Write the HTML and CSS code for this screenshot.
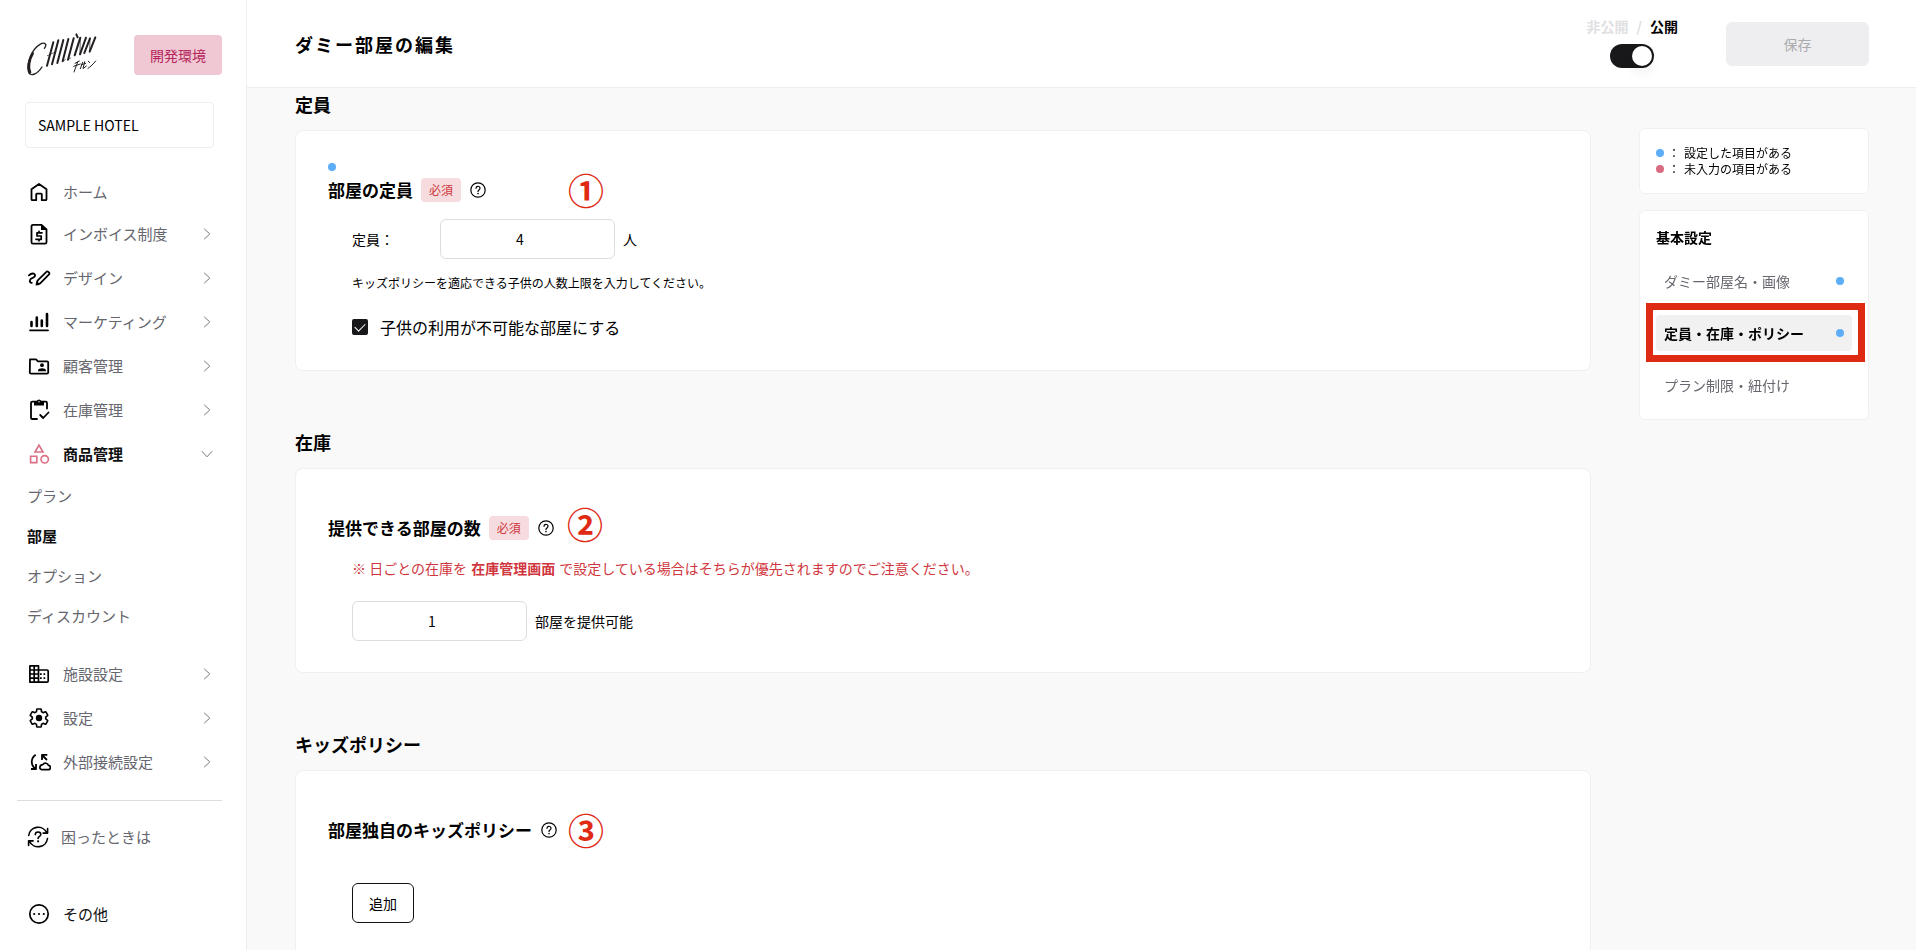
FILE: index.html
```html
<!DOCTYPE html>
<html lang="ja">
<head>
<meta charset="utf-8">
<meta name="viewport" content="width=device-width, initial-scale=1">
<title>ダミー部屋の編集</title>
<link rel="stylesheet" href="styles.css">
</head>
<body>
<svg class="defs" aria-hidden="true">
  <symbol id="chevron" viewBox="0 0 20 20"><path d="M7.2 4.8 L12.8 10 L7.2 15.2" /></symbol>
  <symbol id="help" viewBox="0 0 18 18">
    <circle cx="9" cy="9" r="7.2" />
    <path d="M7 7.3a2 2 0 1 1 3 1.7c-.7.4-1 .7-1 1.4" />
    <circle class="fill" cx="9" cy="12.6" r=".8" />
  </symbol>
</svg>
<div class="app">
  <aside class="sidebar">
    <div class="brand">
      <svg class="logo" viewBox="48 40 216 132" role="img" aria-label="CHILLNN">
        <path stroke-width="4" d="M103 86C113 74 104 66 90 74C66 88 49 130 55 154C59 174 82 164 96 142" />
        <path stroke-width="8" d="M68 101C57 120 53 144 60 158" />
        <path stroke-width="6" d="M130 68L111 138M145 62L126 134M160 61L142 130M175 58L158 125M191 56L174 120M211 54L194 107M228 54L210 104M240 56L223 100M256 53L239 96" />
        <path stroke-width="2" d="M112 108L138 96M157 125L166 120M173 120L182 115M211 56L210 102M240 58L239 94" />
        <path stroke-width="6" d="M199 44L203 53" />
        <path stroke-width="3" d="M195 131L208 124M191 140L211 133M203 127L192 157M218 128L211 147M224 126L219 147L229 139M215 135L227 131M235 125L239 129M234 146C242 141 250 133 257 124" />
      </svg>
      <span class="env">開発環境</span>
    </div>
    <select class="hotel" aria-label="施設"><option>SAMPLE HOTEL</option></select>
    <nav class="nav" aria-label="メインメニュー">
      <a class="item item--home" href="#">
        <svg class="icon" viewBox="0 0 24 24"><path d="M4.500 9.300 12 4l7.500 5.300V19.200a1 1 0 0 1-1 1h-3.700v-5.700a.8.8 0 0 0-.8-.8h-4a.8.8 0 0 0-.8.8v5.700H5.500a1 1 0 0 1-1-1z" /></svg>
        <span>ホーム</span>
      </a>
      <button class="item" type="button">
        <svg class="icon" viewBox="0 0 24 24"><path d="M14.500 2.800H6a1.500 1.500 0 0 0-1.500 1.500v15.900A1.500 1.500 0 0 0 6 21.700h12a1.500 1.500 0 0 0 1.500-1.500V7.500z" /><path class="fill" d="M14 2v6h6z" /><path stroke-width="1.700" d="M15 10.800H10v3.200h4.200v3.300H9M12 9.300v1.500M12 17.300v1.500" /></svg>
        <span>インボイス制度</span><svg class="chev"><use href="#chevron" /></svg>
      </button>
      <button class="item" type="button">
        <svg class="icon" viewBox="0 0 24 24"><path d="M1.900 9.300C3.300 8 4.300 7.500 5.700 7.500c3.200 0 3.100 3.500 0 4.300-3.500 1-3.800 4.700-.9 5.100M9.800 18.200l.7-3.500L19.400 5.800a1.300 1.300 0 0 1 1.900 0l.7.7a1.300 1.300 0 0 1 0 1.900L13.200 17.400z" /><path class="fill" d="M8.500 19.500l.8-4.200 3.600 3.600z" /></svg>
        <span>デザイン</span><svg class="chev"><use href="#chevron" /></svg>
      </button>
      <button class="item" type="button">
        <svg class="icon" viewBox="0 0 24 24"><path stroke-width="1.800" d="M3 20.300h18" /><path stroke-width="2.600" d="M4.500 12v4M9.800 7.500V16M14.800 10.500V16M20 4v12" /></svg>
        <span>マーケティング</span><svg class="chev"><use href="#chevron" /></svg>
      </button>
      <button class="item" type="button">
        <svg class="icon" viewBox="0 0 24 24"><path d="M3 5.300h6l2 2h9a1.200 1.200 0 0 1 1.200 1.200v10a1.200 1.200 0 0 1-1.200 1.200H4a1.200 1.200 0 0 1-1.200-1.200z" /><circle class="fill" cx="15" cy="11.200" r="1.900" /><path class="fill" d="M11 17.300v-.9c0-1.400 2-2.100 4-2.100s4 .7 4 2.100v.9z" /></svg>
        <span>顧客管理</span><svg class="chev"><use href="#chevron" /></svg>
      </button>
      <button class="item" type="button">
        <svg class="icon" viewBox="0 0 24 24"><path d="M10 21H5.300A1.300 1.300 0 0 1 4 19.700V5a1.300 1.300 0 0 1 1.300-1.300h13.400A1.300 1.300 0 0 1 20 5v5.500M13.200 17l3 3 5.300-5.500" /><path class="fill" d="M7 3h2.700a2.500 2.500 0 0 1 4.600 0H17v4.500H7z" /><circle cx="12" cy="3.800" r=".7" fill="#fff" stroke="none" /></svg>
        <span>在庫管理</span><svg class="chev"><use href="#chevron" /></svg>
      </button>
      <button class="item item--open" type="button" aria-expanded="true">
        <svg class="icon icon--pink" viewBox="0 0 24 24"><path stroke-width="1.600" d="M12 3.200l4 6.800H8zM3.600 14.200h6.200v6.400H3.600z" /><circle stroke-width="1.600" cx="17.700" cy="17.300" r="3.700" /></svg>
        <span>商品管理</span><svg class="chev"><use href="#chevron" /></svg>
      </button>
      <div class="subnav">
        <a href="#">プラン</a>
        <a href="#" class="current" aria-current="page">部屋</a>
        <a href="#">オプション</a>
        <a href="#">ディスカウント</a>
      </div>
      <button class="item" type="button">
        <svg class="icon" viewBox="0 0 24 24"><path d="M2.900 3.900h8.600v16.300H2.900zM7.200 3.900v16.300M2.900 8h8.600M2.900 12h8.600M2.900 16.100h8.600M11.500 8h8.400a1.300 1.300 0 0 1 1.300 1.300v9.600a1.300 1.300 0 0 1-1.300 1.300h-8.400" stroke-width="1.700" /><path class="fill" d="M13 11.200h1.700v1.700H13zM16.500 11.200h1.700v1.700h-1.700zM13 15.200h1.700v1.700H13zM16.500 15.200h1.700v1.700h-1.700z" /></svg>
        <span>施設設定</span><svg class="chev"><use href="#chevron" /></svg>
      </button>
      <button class="item" type="button">
        <svg class="icon" viewBox="0 0 24 24"><g transform="translate(1.2 1.2) scale(.9)"><path d="M19.430 12.980c.04-.32.07-.64.07-.98 0-.34-.03-.66-.07-.98l2.110-1.650c.19-.15.24-.42.12-.64l-2-3.460c-.09-.16-.26-.25-.44-.25-.06 0-.12.010-.17.030l-2.490 1c-.52-.4-1.080-.73-1.690-.98l-.38-2.650C14.460 2.180 14.250 2 14 2h-4c-.25 0-.46.18-.49.42l-.38 2.650c-.61.25-1.170.59-1.690.98l-2.490-1c-.06-.02-.12-.03-.18-.03-.17 0-.34.09-.43.25l-2 3.460c-.13.22-.07.49.12.64l2.110 1.650c-.04.32-.07.65-.07.98 0 .33.030.66.070.98l-2.110 1.650c-.19.15-.24.42-.12.64l2 3.460c.09.16.26.25.44.25.06 0 .12-.01.17-.03l2.490-1c.52.4 1.080.73 1.690.98l.38 2.650c.03.24.24.42.49.42h4c.25 0 .46-.18.49-.42l.38-2.650c.61-.25 1.170-.59 1.690-.98l2.490 1c.06.02.12.03.18.03.17 0 .34-.09.43-.25l2-3.460c.12-.22.07-.49-.12-.64z" /></g><circle class="fill" cx="12" cy="12" r="3.200" /></svg>
        <span>設定</span><svg class="chev"><use href="#chevron" /></svg>
      </button>
      <button class="item" type="button">
        <svg class="icon" viewBox="0 0 24 24"><path d="M8.700 4.700C3.700 8 3.300 15 8.500 18.800M9 14v5H4M20 10l-5-5M15 10V4.800h5.300" stroke-width="1.800" stroke-linecap="butt" /><path stroke-width="1.700" d="M14.800 19.600h6.400a2.100 2.100 0 0 0 .2-4.200c-.5-2-3.800-3.600-5.600-.8-3.700.2-3.700 4.700-1 5z" /></svg>
        <span>外部接続設定</span><svg class="chev"><use href="#chevron" /></svg>
      </button>
    </nav>
    <hr class="rule">
    <a class="item item--help" href="#">
      <svg class="icon" viewBox="0 0 24 24"><path stroke-width="1.600" d="M2.700 10.500A9.500 9.500 0 0 1 20.700 7.700M21.600 3.600v4.500h-4.500M21.500 13.500A9.500 9.500 0 0 1 3.500 16.300M2.600 20.400v-4.500h4.500M9.300 9.600c0-3.500 5.500-3.300 5.500-.2 0 2-2.700 2.100-2.700 4.100" /><circle class="fill" cx="12.100" cy="16.300" r="1.100" /></svg>
      <span>困ったときは</span>
    </a>
    <button class="item item--more" type="button">
      <svg class="icon" viewBox="0 0 24 24"><circle cx="12" cy="12" r="9.200" stroke-width="1.700" /><circle class="fill" cx="7.200" cy="12" r="1.100" /><circle class="fill" cx="12" cy="12" r="1.100" /><circle class="fill" cx="16.800" cy="12" r="1.100" /></svg>
      <span>その他</span>
    </button>
  </aside>

  <div class="page">
    <header class="topbar">
      <h1>ダミー部屋の編集</h1>
      <div class="publish">
        <label class="publish-label" for="publish"><span class="off">非公開</span><span class="off slash">/</span><span>公開</span></label>
        <input class="toggle" id="publish" type="checkbox" role="switch" checked>
      </div>
      <button class="save" type="button" disabled>保存</button>
    </header>

    <div class="content">
      <main class="sections">
        <section>
          <h2>定員</h2>
          <div class="card card--capacity">
            <div class="status"><i class="dot"></i></div>
            <div class="card-title">
              <h3>部屋の定員</h3><span class="required">必須</span>
              <button class="hint" type="button" aria-label="ヘルプ"><svg><use href="#help" /></svg></button>
            </div>
            <span class="mark mark--one">①</span>
            <div class="field">
              <label class="field-label" for="capacity">定員：</label>
              <input class="number" id="capacity" type="text" inputmode="numeric" value="4">
              <span>人</span>
            </div>
            <p class="note">キッズポリシーを適応できる子供の人数上限を入力してください。</p>
            <label class="check"><input type="checkbox" checked><span>子供の利用が不可能な部屋にする</span></label>
          </div>
        </section>

        <section>
          <h2>在庫</h2>
          <div class="card card--stock">
            <div class="status"></div>
            <div class="card-title">
              <h3>提供できる部屋の数</h3><span class="required">必須</span>
              <button class="hint" type="button" aria-label="ヘルプ"><svg><use href="#help" /></svg></button>
            </div>
            <span class="mark mark--two">②</span>
            <p class="warning">※ 日ごとの在庫を <a href="#">在庫管理画面</a> で設定している場合はそちらが優先されますのでご注意ください。</p>
            <div class="field">
              <input class="number" id="stock" type="text" inputmode="numeric" value="1">
              <label for="stock">部屋を提供可能</label>
            </div>
          </div>
        </section>

        <section>
          <h2>キッズポリシー</h2>
          <div class="card card--kids">
            <div class="status"></div>
            <div class="card-title">
              <h3>部屋独自のキッズポリシー</h3>
              <button class="hint" type="button" aria-label="ヘルプ"><svg><use href="#help" /></svg></button>
            </div>
            <span class="mark mark--one">③</span>
            <button class="add" type="button">追加</button>
          </div>
        </section>
      </main>

      <aside class="rail">
        <ul class="panel legend">
          <li><i class="dot"></i><span class="colon">：</span><span>設定した項目がある</span></li>
          <li><i class="dot dot--pink"></i><span class="colon">：</span><span>未入力の項目がある</span></li>
        </ul>
        <nav class="panel toc" aria-label="基本設定">
          <h4>基本設定</h4>
          <a href="#"><span>ダミー部屋名・画像</span><i class="dot"></i></a>
          <a href="#" class="active" aria-current="true"><span>定員・在庫・ポリシー</span><i class="dot"></i></a>
          <a href="#"><span>プラン制限・紐付け</span></a>
        </nav>
      </aside>
    </div>
  </div>
</div>
</body>
</html>
```
FILE: styles.css
```css
* { box-sizing: border-box; }

body {
  margin: 0;
  background: #f9f9f9;
  color: #000;
  font-family: "Noto Sans CJK JP", sans-serif;
  font-size: 14px;
  line-height: 20px;
}

h1, h2, h3, h4, p, ul { margin: 0; padding: 0; }
ul { list-style: none; }
a { color: inherit; text-decoration: none; }
button, input, select { font: inherit; color: inherit; }
button { cursor: pointer; }
.defs { display: none; }

svg { fill: none; stroke: currentColor; }
.fill { fill: currentColor; stroke: none; }

.app { display: flex; height: 100vh; }

/* Sidebar */
.sidebar {
  flex: none;
  width: 247px;
  padding: 35px 24px 14px 17px;
  overflow-y: auto;
  scrollbar-width: none;
  background: #fff;
  border-right: 1px solid #eee;
  font-size: 15px;
}
.brand {
  display: flex;
  align-items: center;
  justify-content: space-between;
  padding-left: 9px;
}
.logo { width: 72px; height: 44px; margin: -2px 0; color: #231f20; stroke-linecap: round; }
.env {
  padding: 10px 16px;
  border-radius: 4px;
  background: #efc8d3;
  color: #b5245a;
  font-size: 14px;
}
.hotel {
  display: block;
  appearance: none;
  width: 189px;
  height: 46px;
  margin: 27px 0 24px 8px;
  padding: 0 12px;
  border: 1px solid #eee;
  border-radius: 4px;
  background: #fff;
  font-size: 14px;
}
.item {
  display: flex;
  align-items: center;
  gap: 12px;
  width: 100%;
  height: 44px;
  padding: 0 5px 0 10px;
  border: 0;
  background: none;
  color: #66666e;
  text-align: left;
}
.item--home { height: 40px; }
.item--open { color: #111; font-weight: 700; }
.item--help { margin-top: 14px; padding-left: 9px; gap: 11px; }
.item--more { margin-top: 33px; color: #111; }
.icon {
  flex: none;
  width: 24px;
  height: 24px;
  color: #000;
  stroke-width: 1.8;
  stroke-linejoin: round;
  stroke-linecap: round;
}
.icon--pink { color: #dd6f85; stroke-linejoin: miter; }
.chev { width: 20px; height: 20px; margin-left: auto; color: #77777e; }
.item--open .chev { transform: rotate(90deg); }
.subnav { margin-bottom: 16px; }
.subnav a {
  display: block;
  padding: 10px;
  color: #66666e;
}
.subnav .current { color: #111; font-weight: 700; }
.rule { margin: 16px 0 0; border: 0; border-top: 1px solid #ddd; }

/* Top bar */
.page { flex: 1; display: flex; flex-direction: column; min-width: 0; }
.topbar {
  flex: none;
  display: flex;
  align-items: center;
  height: 88px;
  padding: 0 47px 0 48px;
  border-bottom: 1px solid #eee;
  background: #fff;
}
h1 { flex: 1; font-size: 18px; line-height: 28px; letter-spacing: 2px; }
.publish {
  display: flex;
  flex-direction: column;
  align-items: center;
  gap: 8px;
  margin-right: 48px;
  padding-bottom: 4px;
}
.publish-label { display: flex; font-weight: 700; }
.off { color: #e0e0e2; }
.slash { padding: 0 8px; }
.toggle {
  appearance: none;
  width: 44px;
  height: 24px;
  margin: 0;
  padding: 2px;
  border-radius: 12px;
  background: #18181b;
}
.toggle::before {
  content: "";
  display: block;
  width: 20px;
  height: 20px;
  margin-left: auto;
  border-radius: 50%;
  background: #fff;
  box-shadow: 0 8px 12px rgba(0, 0, 0, .06);
}
.save {
  width: 143px;
  height: 44px;
  border: 0;
  border-radius: 6px;
  background: #eeeef0;
  color: #ababaf;
}

/* Sections */
.content {
  flex: 1;
  display: flex;
  align-items: flex-start;
  gap: 48px;
  min-height: 0;
  padding: 3px 47px 0 48px;
  overflow-y: auto;
  scrollbar-width: none;
}
.sections { flex: 1; min-width: 0; }
h2 { margin-bottom: 13px; font-size: 18px; line-height: 26px; }
.card {
  position: relative;
  margin-bottom: 58px;
  padding: 32px 32px 31px;
  border: 1px solid #f0f0f0;
  border-radius: 8px;
  background: #fff;
}
.status { height: 8px; margin-bottom: 7px; }
.dot {
  display: block;
  flex: none;
  width: 8px;
  height: 8px;
  border-radius: 50%;
  background: #5eaef7;
}
.dot--pink { background: #d96b80; }
.card-title { display: flex; align-items: center; gap: 8px; height: 24px; }
h3 { font-size: 17px; line-height: 24px; }
.required {
  padding: 2px 8px;
  border-radius: 4px;
  background: #f6dcde;
  color: #d0363d;
  font-size: 12px;
}
.hint { display: flex; padding: 0; border: 0; background: none; }
.hint svg { width: 18px; height: 18px; stroke-width: 1.2; stroke-linecap: round; }
.field { display: flex; align-items: center; gap: 8px; margin-left: 24px; }
.field-label { width: 80px; }
.number {
  width: 175px;
  height: 40px;
  padding: 0 23px 0 8px;
  border: 1px solid #ddd;
  border-radius: 6px;
  background: #fff;
  text-align: center;
}
.note { margin: 14px 0 0 24px; font-size: 12px; }
.check {
  display: flex;
  align-items: center;
  gap: 12px;
  margin: 22px 0 0 24px;
  font-size: 16px;
  line-height: 24px;
}
.check input {
  appearance: none;
  display: grid;
  place-items: center;
  width: 16px;
  height: 16px;
  margin: 0;
  border-radius: 2px;
  background: #18181b;
}
.check input::before {
  content: "";
  width: 9px;
  height: 5px;
  margin-top: -2px;
  border: solid #fff;
  border-width: 0 0 1px 1px;
  transform: rotate(-45deg);
}
.warning { margin: 18px 0 0 24px; color: #d0363d; }
.warning a { padding: 0 1px; font-weight: 700; }
.card--capacity .field { margin-top: 17px; }
.card--stock .field { margin-top: 23px; }
.card--kids { padding-bottom: 48px; }
.add {
  display: block;
  height: 40px;
  margin: 41px 0 0 24px;
  padding: 0 16px;
  border: 1px solid #111;
  border-radius: 6px;
  background: #fff;
}

/* Numbered annotations laid over the cards */
.mark {
  position: absolute;
  left: 272px;
  top: 40px;
  color: #e02b14;
  font-size: 36px;
  line-height: 36px;
  font-weight: 700;
}
.mark--two { left: 271px; top: 36px; }

/* Right rail */
.rail {
  position: sticky;
  top: 36px;
  flex: none;
  width: 230px;
  margin-top: 37px;
}
.panel {
  border: 1px solid #f0f0f0;
  border-radius: 6px;
  background: #fff;
}
.legend {
  margin-bottom: 16px;
  padding: 16px;
  font-size: 12px;
  line-height: 16px;
}
.legend li { display: flex; align-items: center; gap: 4px; }
.toc { padding: 16px; }
.toc h4 { margin-bottom: 16px; font-size: 14px; line-height: 20px; }
.toc a {
  position: relative;
  display: flex;
  align-items: center;
  justify-content: space-between;
  height: 36px;
  padding: 0 8px;
  border-radius: 4px;
  color: #66666e;
}
.toc a + a { margin-top: 16px; }
.toc .active { background: #f1f1f1; color: #000; font-weight: 700; }
.toc .active::after {
  content: "";
  position: absolute;
  inset: -12px -13px -11px -10px;
  border: 7px solid #e02b14;
}
```
